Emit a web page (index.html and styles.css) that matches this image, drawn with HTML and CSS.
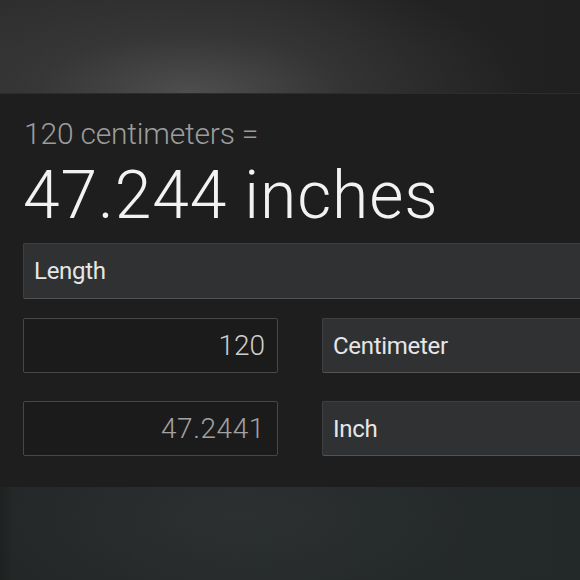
FILE: index.html
```html
<!DOCTYPE html>
<html lang="en">
<head>
<meta charset="utf-8">
<title>Unit converter</title>
<link rel="stylesheet" href="styles.css">
</head>
<body>
<div class="hero"></div>
<main class="panel">
  <div class="subtitle">120 centimeters =</div>
  <div class="result">47.244 inches</div>
  <div class="field select category">Length</div>
  <div class="row">
    <div class="field input active">120</div>
    <div class="field select unit">Centimeter</div>
  </div>
  <div class="row">
    <div class="field input">47.2441</div>
    <div class="field select unit">Inch</div>
  </div>
</main>
<div class="footer"></div>
</body>
</html>
```
FILE: styles.css
```css
html, body {
  margin: 0;
  padding: 0;
  background: #1f1f1f;
  height: 580px;
  overflow: hidden;
  font-family: Roboto, "Liberation Sans", Arial, sans-serif;
}

.hero {
  height: 93px;
  background:
    radial-gradient(ellipse 340px 130px at 190px 100%, rgba(80, 80, 80, 0.95) 0%, rgba(62, 62, 62, 0.6) 45%, rgba(40, 40, 40, 0) 100%),
    linear-gradient(to right, #2c2c2c 0%, #282828 45%, #222222 70%, #202020 100%);
}

.panel {
  background: #1e1e1e;
  border-top: 1px solid #2c2c2c;
  padding: 22px 0 31px 23px;
  overflow: hidden;
}

.subtitle {
  font-size: 30px;
  font-weight: 300;
  line-height: 36px;
  color: #9c9c9c;
  padding-left: 1px;
  letter-spacing: -0.2px;
}

.result {
  margin-top: 12px;
  font-size: 66px;
  font-weight: 300;
  line-height: 64px;
  height: 64px;
  color: #f2f2f2;
  letter-spacing: 0.9px;
}

.field {
  box-sizing: border-box;
  height: 55px;
  display: flex;
  align-items: center;
  line-height: 24px;
}

.select {
  background: #2f3133;
  border: 1px solid #3d3f41;
  border-bottom-color: #515355;
  border-radius: 2px 0 0 2px;
  border-right: none;
  color: #e6e6e6;
  font-size: 24px;
  font-weight: 400;
  letter-spacing: -0.3px;
  padding-left: 10px;
}

.category {
  margin-top: 15px;
  height: 56px;
  width: 620px;
}

.row {
  display: flex;
  gap: 44px;
  margin-top: 19px;
}

.row + .row {
  margin-top: 28px;
}

.input {
  flex: 0 0 255px;
  background: #1b1b1b;
  border: 1px solid #474747;
  border-radius: 2px;
  justify-content: flex-end;
  padding-right: 12px;
  font-size: 28px;
  font-weight: 300;
  color: #a2a2a2;
  letter-spacing: 0.6px;
}

.input.active {
  color: #cfcfcf;
  letter-spacing: 0;
}

.unit {
  flex: 0 0 320px;
}

.footer {
  height: 100px;
  background:
    radial-gradient(ellipse 260px 90px at 240px 30px, rgba(50, 54, 55, 0.5), rgba(40, 44, 45, 0)),
    linear-gradient(to right, #1f2020 0px, #242727 12px, #262a2b 40%, #232829 100%);
}
```
